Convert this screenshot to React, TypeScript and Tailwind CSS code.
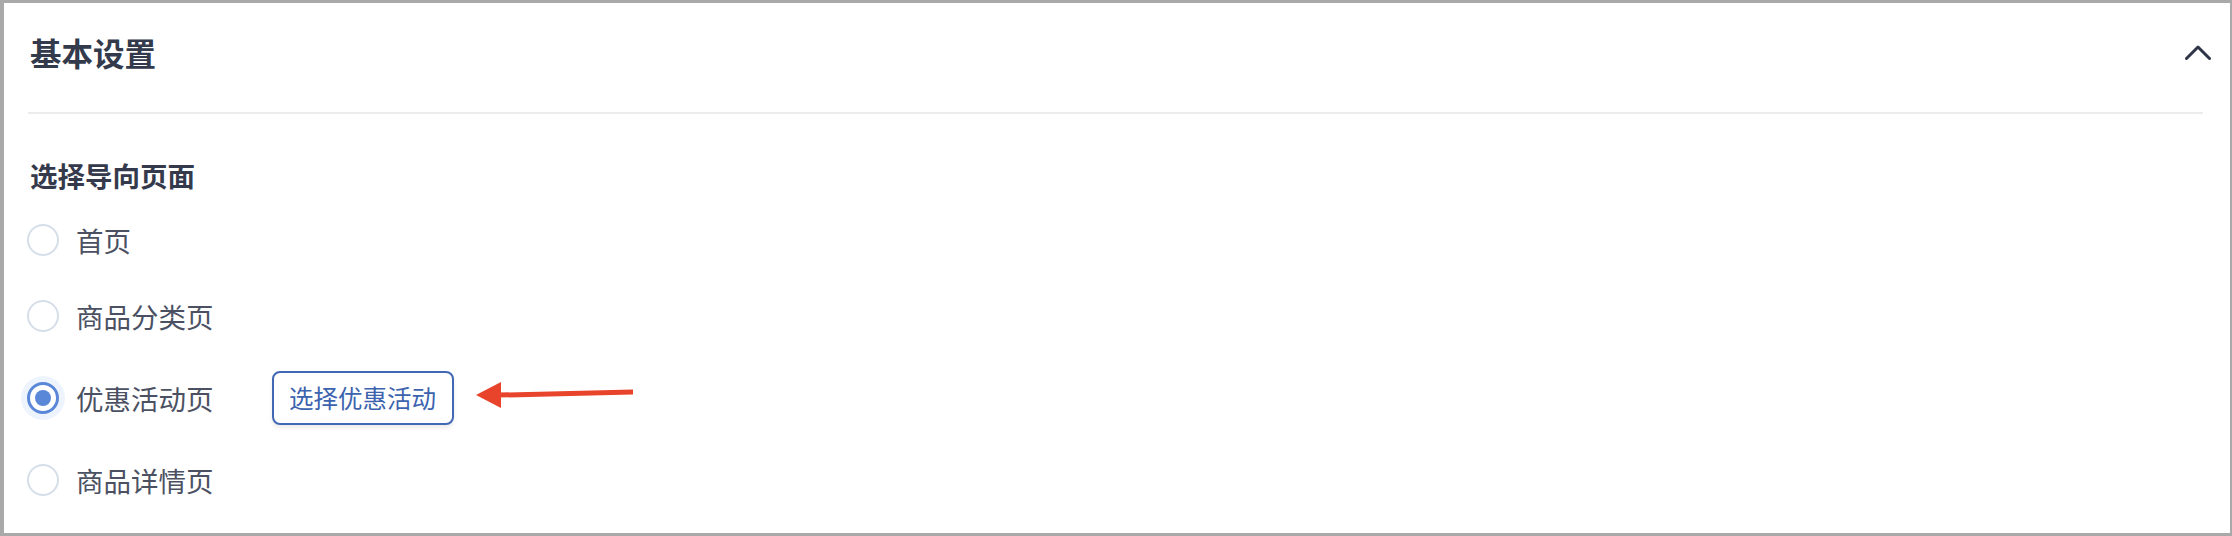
import { useState } from 'react';

type Option = {
  value: string;
  label: string;
};

const options: Option[] = [
  { value: 'home', label: '首页' },
  { value: 'category', label: '商品分类页' },
  { value: 'promotion', label: '优惠活动页' },
  { value: 'detail', label: '商品详情页' },
];

const font = { fontFamily: '"Noto Sans CJK SC", "Noto Sans", sans-serif' };

export default function App() {
  const [selected, setSelected] = useState('promotion');

  return (
    <div
      className="h-[536px] w-full border-b-[3px] border-l-4 border-r-2 border-t-[3px] border-[#a9a9a9] bg-white"
      style={font}
    >
      <div className="pl-[24px] pr-[27px]">
        {/* Section header */}
        <div className="flex items-center justify-between pt-[30px]">
          <h2 className="pl-[2px] text-[31.5px] leading-[38px] font-semibold text-[#333a4c]">基本设置</h2>
          <button className="-mr-[9px] flex h-[24px] w-[28px] items-center justify-center text-[#2f3548]">
            <svg width="26" height="15" viewBox="0 0 26 15" fill="none">
              <polyline
                points="1.5,13.5 13,2 24.5,13.5"
                stroke="currentColor"
                strokeWidth="3"
                strokeLinecap="round"
                strokeLinejoin="round"
              />
            </svg>
          </button>
        </div>
        <div className="mt-[41px] h-[2px] bg-[#ececec]" />

        {/* Landing page picker */}
        <p className="mt-[43px] pl-[2px] text-[27.5px] leading-[36px] font-semibold text-[#343a4b]">选择导向页面</p>
        <div className="mt-[25px] flex flex-col gap-[32px]">
          {options.map((o) => (
            <RadioRow
              key={o.value}
              option={o}
              checked={selected === o.value}
              onSelect={() => setSelected(o.value)}
            />
          ))}
        </div>
      </div>
    </div>
  );
}

function RadioRow({
  option,
  checked,
  onSelect,
}: {
  option: Option;
  checked: boolean;
  onSelect: () => void;
}) {
  const withAction = option.value === 'promotion';

  return (
    <div className={`flex items-center ${withAction ? 'h-[56px]' : 'h-[44px]'}`}>
      <label className="flex cursor-pointer items-center" onClick={onSelect}>
        <span className="relative flex h-[44px] w-[44px] -ml-[7px] items-center justify-center">
          {checked && <span className="absolute inset-0 rounded-full bg-[#eef4fd]" />}
          <span
            className={`relative flex h-[32px] w-[32px] items-center justify-center rounded-full bg-white ${
              checked ? 'border-[3px] border-[#5b87d9]' : 'border-2 border-[#d6dee9]'
            }`}
          >
            {checked && <span className="h-[16px] w-[16px] rounded-full bg-[#5b87d9]" />}
          </span>
        </span>
        <span className="ml-[11px] text-[27.5px] leading-[36px] text-[#4b5162]">{option.label}</span>
      </label>

      {withAction && (
        <>
          <button className="ml-[58px] h-[54px] w-[182px] rounded-[8px] border-2 border-[#4068b4] bg-white text-[24.5px] leading-[32px] text-[#3c63ae] shadow-[0_3px_4px_rgba(0,0,0,0.08)]">
            选择优惠活动
          </button>
          <svg className="ml-[22px] -mt-[6px]" width="158" height="30" viewBox="0 0 158 30">
            <polygon points="0,15 25,2 25,28" fill="#e8432b" />
            <polygon points="22,12.6 157,9.6 157,14.6 22,17.6" fill="#e8432b" />
          </svg>
        </>
      )}
    </div>
  );
}
